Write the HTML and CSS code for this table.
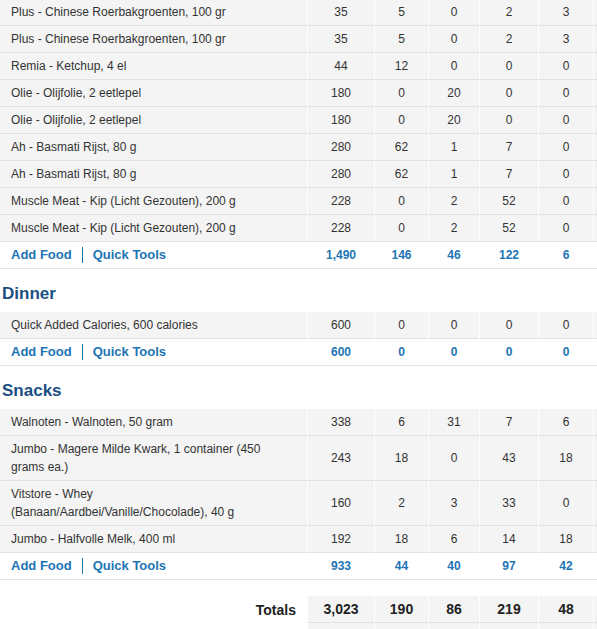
FILE: index.html
```html
<!DOCTYPE html>
<html lang="nl">
<head>
<meta charset="utf-8">
<title>Food Diary</title>
<link rel="stylesheet" href="styles.css">
</head>
<body>
<div class="viewport">
<table class="diary">
  <colgroup>
    <col class="c-name"><col class="c-cal"><col class="c-carb"><col class="c-fat"><col class="c-prot"><col class="c-sug"><col class="c-extra">
  </colgroup>
  <tbody>
    <tr class="food"><td>Plus - Chinese Roerbakgroenten, 100 gr</td><td>35</td><td>5</td><td>0</td><td>2</td><td>3</td><td></td></tr>
    <tr class="food"><td>Plus - Chinese Roerbakgroenten, 100 gr</td><td>35</td><td>5</td><td>0</td><td>2</td><td>3</td><td></td></tr>
    <tr class="food"><td>Remia - Ketchup, 4 el</td><td>44</td><td>12</td><td>0</td><td>0</td><td>0</td><td></td></tr>
    <tr class="food"><td>Olie - Olijfolie, 2 eetlepel</td><td>180</td><td>0</td><td>20</td><td>0</td><td>0</td><td></td></tr>
    <tr class="food"><td>Olie - Olijfolie, 2 eetlepel</td><td>180</td><td>0</td><td>20</td><td>0</td><td>0</td><td></td></tr>
    <tr class="food"><td>Ah - Basmati Rijst, 80 g</td><td>280</td><td>62</td><td>1</td><td>7</td><td>0</td><td></td></tr>
    <tr class="food"><td>Ah - Basmati Rijst, 80 g</td><td>280</td><td>62</td><td>1</td><td>7</td><td>0</td><td></td></tr>
    <tr class="food"><td>Muscle Meat - Kip (Licht Gezouten), 200 g</td><td>228</td><td>0</td><td>2</td><td>52</td><td>0</td><td></td></tr>
    <tr class="food"><td>Muscle Meat - Kip (Licht Gezouten), 200 g</td><td>228</td><td>0</td><td>2</td><td>52</td><td>0</td><td></td></tr>
    <tr class="foot"><td><a class="link" href="#">Add Food</a><span class="sep"></span><a class="link" href="#">Quick Tools</a></td><td>1,490</td><td>146</td><td>46</td><td>122</td><td>6</td><td></td></tr>

    <tr class="meal-head"><td colspan="7"><h2>Dinner</h2></td></tr>
    <tr class="food"><td>Quick Added Calories, 600 calories</td><td>600</td><td>0</td><td>0</td><td>0</td><td>0</td><td></td></tr>
    <tr class="foot"><td><a class="link" href="#">Add Food</a><span class="sep"></span><a class="link" href="#">Quick Tools</a></td><td>600</td><td>0</td><td>0</td><td>0</td><td>0</td><td></td></tr>

    <tr class="meal-head"><td colspan="7"><h2>Snacks</h2></td></tr>
    <tr class="food"><td>Walnoten - Walnoten, 50 gram</td><td>338</td><td>6</td><td>31</td><td>7</td><td>6</td><td></td></tr>
    <tr class="food"><td>Jumbo - Magere Milde Kwark, 1 container (450 grams ea.)</td><td>243</td><td>18</td><td>0</td><td>43</td><td>18</td><td></td></tr>
    <tr class="food"><td>Vitstore - Whey (Banaan/Aardbei/Vanille/Chocolade), 40 g</td><td>160</td><td>2</td><td>3</td><td>33</td><td>0</td><td></td></tr>
    <tr class="food"><td>Jumbo - Halfvolle Melk, 400 ml</td><td>192</td><td>18</td><td>6</td><td>14</td><td>18</td><td></td></tr>
    <tr class="foot"><td><a class="link" href="#">Add Food</a><span class="sep"></span><a class="link" href="#">Quick Tools</a></td><td>933</td><td>44</td><td>40</td><td>97</td><td>42</td><td></td></tr>

    <tr class="gap"><td colspan="7"></td></tr>
    <tr class="total"><td>Totals</td><td>3,023</td><td>190</td><td>86</td><td>219</td><td>48</td><td></td></tr>
    <tr class="total"><td></td><td></td><td></td><td></td><td></td><td></td><td></td></tr>
  </tbody>
</table>
</div>
</body>
</html>
```

FILE: styles.css
```css
* {
  box-sizing: border-box;
}

html,
body {
  margin: 0;
  padding: 0;
  overflow: hidden;
  background: #fff;
}

body {
  font-family: "Liberation Sans", Arial, sans-serif;
  font-size: 12px;
  color: #333;
}

.viewport {
  width: 597px;
  height: 629px;
  overflow: hidden;
}

.diary {
  border-collapse: separate;
  border-spacing: 0;
  table-layout: fixed;
  width: 653px;
  margin-top: -1px;
}

.c-name { width: 307px; }
.c-cal { width: 67px; }
.c-carb { width: 54px; }
.c-fat { width: 51px; }
.c-prot { width: 59px; }
.c-sug { width: 55px; }
.c-extra { width: 60px; }

.diary td {
  padding: 4px 11px;
  line-height: 18px;
  height: 27px;
  vertical-align: middle;
  text-align: center;
}

.diary td:first-child {
  text-align: left;
  padding-right: 20px;
}

.food td {
  background: #f4f4f4;
  border-bottom: 1px solid #e2e2e2;
}

.food td + td,
.foot td + td,
.total td + td {
  border-left: 1px solid #fff;
}

.foot td {
  background: #fff;
  border-bottom: 1px solid #e2e2e2;
  color: #1d74b5;
  font-weight: bold;
}

.link {
  color: #1d74b5;
  font-size: 13px;
  font-weight: bold;
  text-decoration: none;
}

.sep {
  display: inline-block;
  width: 1px;
  height: 16px;
  margin: 0 10px;
  background: #1d74b5;
  vertical-align: -4px;
}

.meal-head td {
  height: 43px;
  padding: 15px 2px 8px;
  background: #fff;
}

.meal-head h2 {
  margin: 0;
  font-size: 17px;
  line-height: 20px;
  font-weight: bold;
  color: #1b4f84;
}

.gap td {
  height: 16px;
  padding: 0;
}

.total td {
  background: #f4f4f4;
  border-bottom: 1px solid #e2e2e2;
  font-size: 14px;
  font-weight: bold;
  color: #222;
}

.diary .total td:first-child {
  background: #fff;
  border-bottom: none;
  text-align: right;
  padding-right: 11px;
}
```
